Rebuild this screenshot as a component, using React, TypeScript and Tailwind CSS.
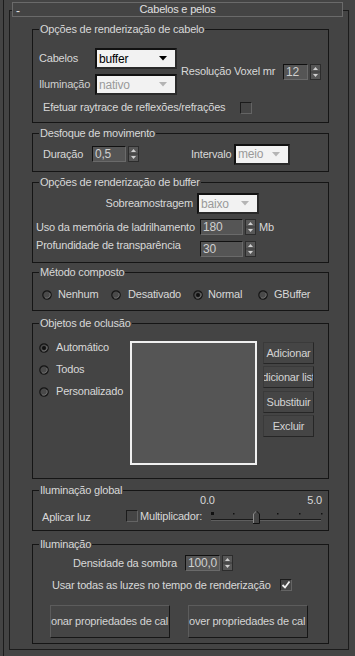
import React from "react";

const Arrow = ({ color }: { color: string }) => (
  <svg width="8" height="5" viewBox="0 0 8 5" className="shrink-0">
    <path d="M0 0 H8 L4 4.5 Z" fill={color} />
  </svg>
);

const Dropdown = ({ value, className, disabled }: { value: string; className: string; disabled?: boolean }) => (
  <div
    className={`flex items-center h-[21px] bg-[#f2f2f2] border-2 border-[#111] border-b-[#2a2a2a] border-r-[#2a2a2a] pl-[2px] pr-[8px] ${className}`}
  >
    <span className={`flex-1 text-[12px] leading-[14px] ${disabled ? "text-[#9a9a9a]" : "text-black"}`}>{value}</span>
    <Arrow color={disabled ? "#b4b4b4" : "#000"} />
  </div>
);

const SpinArrows = () => (
  <svg width="11" height="16" viewBox="0 0 11 16" className="shrink-0">
    <rect x="0.5" y="0.5" width="10" height="15" fill="#575757" stroke="#2c2c2c" />
    <line x1="1" y1="8" x2="10" y2="8" stroke="#3a3a3a" />
    <path d="M3 6 L5.5 3 L8 6 Z" fill="#d0d0d0" />
    <path d="M3 10 L5.5 13 L8 10 Z" fill="#d0d0d0" />
  </svg>
);

const Spinner = ({ value, className }: { value: string; className: string }) => (
  <div className="flex items-center gap-[2px]">
    <div
      className={`h-[16px] flex items-center bg-[#555] border border-[#111] border-b-[#6a6a6a] border-r-[#6a6a6a] pl-[2px] text-[12px] leading-[14px] text-[#cfcfcf] ${className}`}
    >
      {value}
    </div>
    <SpinArrows />
  </div>
);

const Check = ({ checked }: { checked?: boolean }) => (
  <div className="w-[12px] h-[12px] shrink-0 border border-[#1b1b1b] border-b-[#646464] border-r-[#646464] bg-[#454545] flex items-center justify-center">
    {checked && (
      <svg width="10" height="10" viewBox="0 0 10 10">
        <path d="M1.5 5 L4 7.5 L8.5 1.5" fill="none" stroke="#f2f2f2" strokeWidth="1.8" />
      </svg>
    )}
  </div>
);

const Radio = ({ checked }: { checked?: boolean }) => (
  <svg width="10" height="10" viewBox="0 0 10 10" className="shrink-0">
    <circle cx="5" cy="5" r="4.2" fill="#4a4a4a" stroke="#151515" strokeWidth="1.2" />
    <path d="M7.8 3 A3.6 3.6 0 0 1 3 7.8" fill="none" stroke="#777" strokeWidth="0.8" />
    {checked && <circle cx="5" cy="5" r="2" fill="#111" />}
  </svg>
);

const Group = ({ title, className, children }: { title: string; className: string; children?: React.ReactNode }) => (
  <fieldset className={`w-[297px] border border-[#151515] ${className}`}>
    <legend className="ml-[6px] px-[1px] text-[11px] leading-[14px] text-[#d8d8d8]">{title}</legend>
    {children}
  </fieldset>
);

const Btn = ({ label, className }: { label: string; className: string }) => (
  <div
    className={`flex items-center justify-center overflow-hidden whitespace-nowrap border border-[#262626] border-t-[#3a3a3a] border-l-[#3a3a3a] bg-[#454545] text-[11px] text-[#d4d4d4] ${className}`}
  >
    {label}
  </div>
);

const Slider = () => (
  <svg width="114" height="15" viewBox="0 0 114 15" className="shrink-0">
    <rect x="2" y="3" width="3" height="3" fill="#111" />
    {[24, 68, 90, 112].map((x) => (
      <rect key={x} x={x} y="4" width="1.5" height="1.5" fill="#111" />
    ))}
    <line x1="2" y1="10.5" x2="112" y2="10.5" stroke="#1a1a1a" />
    <line x1="2" y1="11.5" x2="112" y2="11.5" stroke="#5e5e5e" />
    <path d="M44.5 14.5 V5 L47.5 2 L50.5 5 V14.5 Z" fill="#454545" />
    <path d="M44.5 14 V5 L47.5 2" fill="none" stroke="#8a8a8a" />
    <path d="M47.5 2 L50.5 5 V14.5 H44" fill="none" stroke="#111" />
  </svg>
);

export default function App() {
  return (
    <div className="w-[355px] h-[656px] bg-[#444444] flex overflow-hidden font-['Liberation_Sans',Arial,sans-serif] text-[11px] tracking-[-0.2px] text-[#d8d8d8]">
      <div className="w-[3px]" />
      <div className="w-[1px] h-full bg-[#1c1c1c]" />
      <div className="w-[5px]" />
      <div className="relative mt-[10px] w-[340px] h-[640px] border border-[#1c1c1c]">
        <div className="absolute -top-[9px] left-[2px] w-[331px] h-[15px] bg-[#444] border border-[#6a6a6a] flex items-center justify-center">
          <span className="absolute left-[3px] top-[-1px] text-[12px] text-[#e0e0e0]">-</span>
          <span className="text-[11px] leading-[13px] text-[#e0e0e0]">Cabelos e pelos</span>
        </div>

        <div className="pt-[11px] pl-[22px] flex flex-col">
          {/* Opções de renderização de cabelo */}
          <Group title="Opções de renderização de cabelo" className="h-[101px]">
            <div className="mt-[12px] flex items-center">
              <div className="pl-[6px] flex flex-col">
                <div className="flex items-center">
                  <span className="w-[56px]">Cabelos</span>
                  <Dropdown value="buffer" className="w-[82px]" />
                </div>
                <div className="flex items-center mt-[5px]">
                  <span className="w-[56px] text-[#cfcfcf]">Iluminação</span>
                  <Dropdown value="nativo" className="w-[82px]" disabled />
                </div>
              </div>
              <span className="ml-[4px] w-[102px] whitespace-nowrap">Resolução Voxel mr</span>
              <Spinner value="12" className="w-[25px]" />
            </div>
            <div className="mt-[6px] pl-[10px] flex items-center h-[13px]">
              <span className="w-[197px] whitespace-nowrap">Efetuar raytrace de reflexões/refrações</span>
              <Check />
            </div>
          </Group>

          {/* Desfoque de movimento */}
          <Group title="Desfoque de movimento" className="h-[46px] mt-[3px]">
            <div className="mt-[6px] pl-[10px] flex items-center h-[16px]">
              <span className="w-[49px]">Duração</span>
              <Spinner value="0,5" className="w-[34px]" />
              <span className="ml-[52px] w-[43px] overflow-hidden whitespace-nowrap">Intervalo</span>
              <Dropdown value="meio" className="w-[56px]" disabled />
            </div>
          </Group>

          {/* Opções de renderização de buffer */}
          <Group title="Opções de renderização de buffer" className="h-[88px] mt-[3px]">
            <div className="mt-[4px] pl-[68px] flex items-center">
              <div className="w-[92px] mr-[4px] flex justify-end whitespace-nowrap">
                <span>Sobreamostragem</span>
              </div>
              <Dropdown value="baixo" className="w-[62px]" disabled />
            </div>
            <div className="mt-[5px] pl-[3px] flex items-center h-[16px]">
              <span className="w-[164px] whitespace-nowrap">Uso da memória de ladrilhamento</span>
              <Spinner value="180" className="w-[43px]" />
              <span className="ml-[3px]">Mb</span>
            </div>
            <div className="mt-[6px] pl-[3px] flex items-start h-[16px]">
              <span className="w-[164px] whitespace-nowrap -mt-[4px]">Profundidade de transparência</span>
              <Spinner value="30" className="w-[43px]" />
            </div>
          </Group>

          {/* Método composto */}
          <Group title="Método composto" className="h-[46px] mt-[2px]">
            <div className="mt-[9px] pl-[9px] flex items-center h-[13px]">
              <div className="w-[69px] flex items-center gap-[6px]">
                <Radio />
                <span>Nenhum</span>
              </div>
              <div className="w-[82px] flex items-center gap-[7px]">
                <Radio />
                <span>Desativado</span>
              </div>
              <div className="w-[65px] flex items-center gap-[5px]">
                <Radio checked />
                <span>Normal</span>
              </div>
              <div className="flex items-center gap-[6px]">
                <Radio />
                <span>GBuffer</span>
              </div>
            </div>
          </Group>

          {/* Objetos de oclusão */}
          <Group title="Objetos de oclusão" className="h-[163px] mt-[5px]">
            <div className="mt-[11px] flex items-start">
              <div className="w-[97px] pl-[6px] flex flex-col gap-[9px]">
                <div className="flex items-center gap-[7px] h-[13px]">
                  <Radio checked />
                  <span>Automático</span>
                </div>
                <div className="flex items-center gap-[7px] h-[13px]">
                  <Radio />
                  <span>Todos</span>
                </div>
                <div className="flex items-center gap-[7px] h-[13px]">
                  <Radio />
                  <span>Personalizado</span>
                </div>
              </div>
              <div className="w-[127px] h-[124px] bg-[#555] border-2 border-[#f0f0f0]" />
              <div className="ml-[6px] mt-[1px] flex flex-col">
                <Btn label="Adicionar" className="w-[51px] h-[22px]" />
                <Btn label="dicionar list" className="w-[51px] h-[22px] mt-[2px]" />
                <Btn label="Substituir" className="w-[51px] h-[22px] mt-[3px]" />
                <Btn label="Excluir" className="w-[51px] h-[22px] mt-[2px]" />
              </div>
            </div>
          </Group>

          {/* Iluminação global */}
          <Group title="Iluminação global" className="h-[48px] mt-[4px]">
            <div className="-mt-[2px] ml-[167px] w-[122px] flex justify-between h-[11px] leading-[11px]">
              <span>0.0</span>
              <span>5.0</span>
            </div>
            <div className="mt-[3px] pl-[9px] flex items-center h-[14px]">
              <span className="w-[84px] mt-[2px]">Aplicar luz</span>
              <Check />
              <span className="ml-[2px] w-[69px] whitespace-nowrap">Multiplicador:</span>
              <Slider />
            </div>
          </Group>

          {/* Iluminação */}
          <Group title="Iluminação" className="h-[107px] mt-[6px]">
            <div className="mt-[4px] pl-[40px] flex items-center h-[16px]">
              <span className="w-[112px] whitespace-nowrap">Densidade da sombra</span>
              <Spinner value="100,0" className="w-[35px]" />
            </div>
            <div className="mt-[8px] pl-[19px] flex items-center h-[12px]">
              <span className="w-[228px] whitespace-nowrap">Usar todas as luzes no tempo de renderização</span>
              <Check checked />
            </div>
            <div className="mt-[14px] pl-[17px] flex gap-[18px]">
              <div className="w-[120px] h-[33px] flex items-center overflow-hidden whitespace-nowrap border border-[#161616] border-t-[#5c5c5c] border-l-[#5c5c5c] bg-[#454545] text-[#d4d4d4]">
                onar propriedades de cal
              </div>
              <div className="w-[120px] h-[33px] flex items-center overflow-hidden whitespace-nowrap border border-[#161616] border-t-[#5c5c5c] border-l-[#5c5c5c] bg-[#454545] text-[#d4d4d4]">
                over propriedades de cal
              </div>
            </div>
          </Group>
        </div>
      </div>
    </div>
  );
}
